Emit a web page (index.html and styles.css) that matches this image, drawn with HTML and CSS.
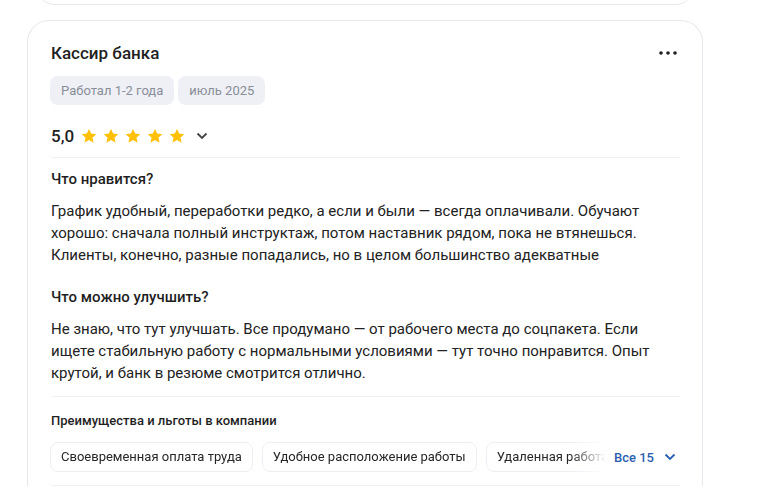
FILE: index.html
```html
<!DOCTYPE html>
<html lang="ru">
<head>
    <meta charset="UTF-8">
    <title>Отзыв</title>
    <link rel="stylesheet" href="styles.css">
</head>
<body>

<div class="prev-card"></div>

<div class="card">
    <div class="head">
        <h2 class="title">Кассир банка</h2>
        <button class="more" aria-label="Ещё">
            <svg width="18" height="4" viewBox="0 0 18 4"><circle cx="2" cy="2" r="1.8"/><circle cx="9" cy="2" r="1.8"/><circle cx="16" cy="2" r="1.8"/></svg>
        </button>
    </div>

    <div class="tags">
        <span class="tag">Работал 1-2 года</span>
        <span class="tag">июль 2025</span>
    </div>

    <div class="rating">
        <span class="score">5,0</span>
        <div class="stars">
            <svg viewBox="0 0 24 24"><path d="M12 2.5l2.9 6.3 6.9.7-5.2 4.6 1.5 6.8L12 17.4l-6.1 3.5 1.5-6.8-5.2-4.6 6.9-.7z"/></svg>
            <svg viewBox="0 0 24 24"><path d="M12 2.5l2.9 6.3 6.9.7-5.2 4.6 1.5 6.8L12 17.4l-6.1 3.5 1.5-6.8-5.2-4.6 6.9-.7z"/></svg>
            <svg viewBox="0 0 24 24"><path d="M12 2.5l2.9 6.3 6.9.7-5.2 4.6 1.5 6.8L12 17.4l-6.1 3.5 1.5-6.8-5.2-4.6 6.9-.7z"/></svg>
            <svg viewBox="0 0 24 24"><path d="M12 2.5l2.9 6.3 6.9.7-5.2 4.6 1.5 6.8L12 17.4l-6.1 3.5 1.5-6.8-5.2-4.6 6.9-.7z"/></svg>
            <svg viewBox="0 0 24 24"><path d="M12 2.5l2.9 6.3 6.9.7-5.2 4.6 1.5 6.8L12 17.4l-6.1 3.5 1.5-6.8-5.2-4.6 6.9-.7z"/></svg>
        </div>
        <svg class="chevron" width="12" height="8" viewBox="0 0 12 8"><path d="M1.5 1.5L6 6l4.5-4.5"/></svg>
    </div>

    <div class="section">
        <h3 class="section-title">Что нравится?</h3>
        <p class="text">График удобный, переработки редко, а если и были — всегда оплачивали. Обучают хорошо: сначала полный инструктаж, потом наставник рядом, пока не втянешься. Клиенты, конечно, разные попадались, но в целом большинство адекватные</p>

        <h3 class="section-title">Что можно улучшить?</h3>
        <p class="text">Не знаю, что тут улучшать. Все продумано — от рабочего места до соцпакета. Если ищете стабильную работу с нормальными условиями — тут точно понравится. Опыт крутой, и банк в резюме смотрится отлично.</p>
    </div>

    <div class="benefits">
        <h4 class="benefits-title">Преимущества и льготы в компании</h4>
        <div class="benefits-row">
            <div class="benefits-list">
                <span class="benefit">Своевременная оплата труда</span>
                <span class="benefit">Удобное расположение работы</span>
                <span class="benefit">Удаленная работа</span>
            </div>
            <button class="all">
                Все 15
                <svg width="12" height="8" viewBox="0 0 12 8"><path d="M1.5 1.5L6 6l4.5-4.5"/></svg>
            </button>
        </div>
    </div>
</div>

</body>
</html>
```

FILE: styles.css
```css
body {
    margin: 0;
    background-color: #fff;
    font-family: Roboto, "Noto Sans", sans-serif;
    color: #1f1f1f;
}
.prev-card {
    width: 654px;
    height: 32px;
    margin: -29px 0 0 37px;
    border: 1px solid #e6e8ee;
    border-radius: 20px;
}
.card {
    width: 629px;
    margin: 15px 0 0 27px;
    padding: 18px 22px 0 23px;
    border: 1px solid #e6e8ee;
    border-bottom: none;
    border-radius: 22px 22px 0 0;
}
.head {
    display: flex;
    justify-content: space-between;
    align-items: center;
    height: 28px;
}
.title {
    margin: 0;
    font-size: 17px;
    font-weight: 500;
    color: #1f1f1f;
}
.more {
    border: none;
    background: none;
    padding: 0;
    margin-right: 3px;
    display: flex;
    fill: #1f1f1f;
}
.tags {
    display: flex;
    gap: 4px;
    margin-top: 9px;
    margin-left: -1px;
}
.tag {
    background-color: #eef0f6;
    color: #8a8e97;
    font-size: 13px;
    height: 29px;
    line-height: 29px;
    padding: 0 11px;
    border-radius: 8px;
}
.rating {
    display: flex;
    align-items: center;
    height: 34px;
    margin-top: 14px;
    padding-bottom: 4px;
    border-bottom: 1px solid #f0f1f4;
}
.score {
    font-size: 17px;
    font-weight: 500;
}
.stars {
    display: flex;
    gap: 4px;
    margin-left: 6px;
}
.stars svg {
    width: 18px;
    height: 18px;
    fill: #ffc107;
}
.chevron {
    margin-left: 10px;
    fill: none;
    stroke: #444;
    stroke-width: 1.8;
}
.section {
    padding-top: 11px;
    padding-bottom: 12px;
    border-bottom: 1px solid #f0f1f4;
}
.section-title {
    margin: 0;
    font-size: 15px;
    font-weight: 500;
    line-height: 20px;
}
.text {
    margin: 11px 0 21px;
    font-size: 15px;
    line-height: 22px;
    color: #222;
}
.text:last-child {
    margin-bottom: 0;
}
.benefits {
    padding-top: 15px;
    padding-bottom: 13px;
    border-bottom: 1px solid #f0f1f4;
}
.benefits-title {
    margin: 0;
    font-size: 13px;
    font-weight: 500;
    line-height: 18px;
}
.benefits-row {
    display: flex;
    align-items: center;
    margin-top: 12px;
    margin-left: -1px;
}
.benefits-list {
    display: flex;
    gap: 9px;
    width: 556px;
    overflow: hidden;
    -webkit-mask-image: linear-gradient(to right, #000 520px, transparent 556px);
    mask-image: linear-gradient(to right, #000 520px, transparent 556px);
}
.benefit {
    flex-shrink: 0;
    font-size: 13px;
    height: 28px;
    line-height: 28px;
    padding: 0 10px;
    border: 1px solid #eceef3;
    border-radius: 8px;
    color: #262626;
    white-space: nowrap;
}
.all {
    display: flex;
    align-items: center;
    gap: 10px;
    margin-left: 8px;
    border: none;
    background: none;
    padding: 0;
    font-family: inherit;
    font-size: 13px;
    font-weight: 500;
    color: #2c5eb0;
}
.all svg {
    fill: none;
    stroke: #2c5eb0;
    stroke-width: 1.8;
}
```
